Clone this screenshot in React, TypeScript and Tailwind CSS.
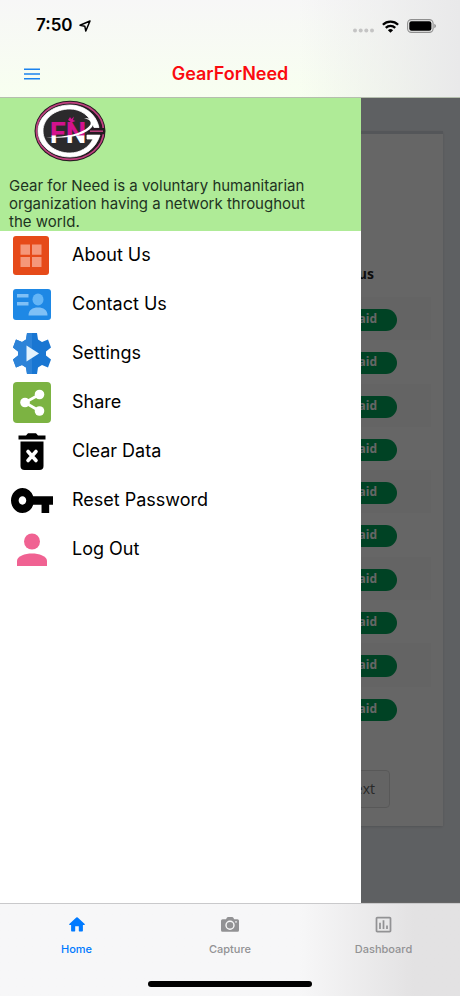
import type { ReactNode } from 'react'
import { MdOutlineInsertChart, MdVpnKey } from 'react-icons/md'

const payments = Array.from({ length: 10 }, (_, i) => ({ id: i + 1, status: 'Paid' }))

function LogoMark() {
  return (
    <svg viewBox="0 0 72 62" className="h-[62px] w-[72px]" role="img" aria-label="Gear for Need logo">
      <ellipse cx="36" cy="32" rx="34" ry="29.5" fill="#6b8f5c" opacity="0.6" />
      <ellipse cx="36" cy="31" rx="35.5" ry="30.3" fill="#231a20" />
      <ellipse cx="36" cy="31" rx="33.6" ry="28.4" fill="#241c22" stroke="#c0417f" strokeWidth="1.7" />
      <ellipse cx="36" cy="31" rx="28" ry="24" fill="#2b2a2c" />
      {/* white G ring, open on the right */}
      <path
        d="M65 27.500C62 13 49 5 36 5C18.500 5 4 16.500 4 31S18.500 57 36 57C51 57 62 48 66 35H53V39H59C55 47.500 46 53 36 53C20.500 53 9 43 9 31S20.500 9 36 9C46 9 56 15 60 27.500Z"
        fill="#fff"
        stroke="#fff"
        strokeWidth="0.8"
      />
      <path d="M55 28H71V34.300H53Z" fill="#231a20" />
      <path d="M56 31.200H69" stroke="#c0417f" strokeWidth="1.500" />
      <defs>
        <linearGradient id="letters" gradientUnits="userSpaceOnUse" x1="0" y1="20" x2="0" y2="44">
          <stop offset="0.64" stopColor="#d3128e" />
          <stop offset="0.65" stopColor="#fff" />
        </linearGradient>
      </defs>
      <text
        x="34"
        y="43"
        textAnchor="middle"
        fontFamily="Roboto, sans-serif"
        fontWeight="700"
        fontSize="29"
        fill="url(#letters)"
      >
        FN
      </text>
      <path d="M12 37C34 38 52 32 56.500 24.500C57.500 21 55 19 50 18.500C59 17 61.500 21.500 58 27C51 35.500 32 39.500 12 37Z" fill="#fff" />
      <path d="M34 20l2-3 1.500 2L40 16.500l-1 3.500 2.500 1-4 1.500Z" fill="#d3128e" />
    </svg>
  )
}

function AboutIcon() {
  return (
    <svg viewBox="0 0 38 39" className="h-[39px] w-[38px]" aria-hidden="true">
      <rect width="36" height="39" rx="3" fill="#e64a19" />
      <path d="M7.500 8.500H17V18.800H7.500zM19 8.500H28.500V18.800H19zM7.500 21H17V31H7.500zM19 21H28.500V31H19z" fill="#f5977a" />
    </svg>
  )
}

function ContactIcon() {
  return (
    <svg viewBox="0 0 38 31" className="h-[31px] w-[38px]" aria-hidden="true">
      <rect width="38" height="31" rx="3" fill="#1e88e5" />
      <path d="M4 5H15.500V8.500H4zM4 13H15.500V16.500H4z" fill="#7fc0f6" />
      <ellipse cx="25" cy="10.500" rx="5.500" ry="6" fill="#64b5f6" />
      <path d="M15.500 26.500C15.500 21 19.500 18.500 25 18.500S34.500 21 34.500 26.500Z" fill="#7fc0f6" />
    </svg>
  )
}

function SettingsIcon() {
  return (
    <svg viewBox="0 0 38 41" className="h-[41px] w-[38px]" aria-hidden="true">
      <path
        d="M14 0H24L25 6.500L29 9L35 6.500L38 14.500L33 18.500V22.500L38 26.500L35 34.500L29 32L25 34.500L24 41H14L13 34.500L9 32L3 34.500L0 26.500L5 22.500V18.500L0 14.500L3 6.500L9 9L13 6.500Z"
        fill="#1976d2"
      />
      <path
        d="M14 0H19V41H14L13 34.500L9 32L3 34.500L0 26.500L5 22.500V18.500L0 14.500L3 6.500L9 9L13 6.500Z"
        fill="#2d83d8"
      />
      <path d="M13.500 12.500L26 20.500L13.500 28.500Z" fill="#e3f2fd" />
    </svg>
  )
}

function ShareIcon() {
  return (
    <svg viewBox="0 0 38 41" className="h-[41px] w-[38px]" aria-hidden="true">
      <rect width="38" height="41" rx="4" fill="#7cb342" />
      <path d="M26.500 12.500L12 20.500L26.500 29" fill="none" stroke="#fff" strokeWidth="2.800" />
      <circle cx="26.500" cy="12.500" r="4.800" fill="#fff" />
      <circle cx="12" cy="20.500" r="4.800" fill="#fff" />
      <circle cx="26.500" cy="29" r="4.800" fill="#fff" />
    </svg>
  )
}

function ClearIcon() {
  return (
    <svg viewBox="0 0 28 37" className="h-[37px] w-7" aria-hidden="true">
      <path d="M.5 2.500H8L10 .3H18L20 2.500H27.500V6.500H.5Z" />
      <path d="M2.500 8.500H25.500V33Q25.500 37 21.500 37H6.500Q2.500 37 2.500 33Z" />
      <path d="M10 18.500L18 27.500M18 18.500L10 27.500" stroke="#fff" strokeWidth="3.600" strokeLinecap="round" />
    </svg>
  )
}

function KeyIcon() {
  return <MdVpnKey viewBox="1 6 22 12" preserveAspectRatio="none" className="h-[25px] w-[42px]" aria-hidden="true" />
}

function PersonIcon() {
  return (
    <svg viewBox="0 0 30 33" className="h-[33px] w-[30px]" aria-hidden="true" fill="#f06292">
      <circle cx="15" cy="8.500" r="8" />
      <path d="M0 33V28C0 23 8 20.500 15 20.500S30 23 30 28V33Z" />
    </svg>
  )
}

function HomeIcon() {
  return (
    <svg viewBox="0 0 16 15" className="h-[15px] w-4" aria-hidden="true" fill="currentColor">
      <path d="M8 .2Q8.300.2 8.700.6L15.700 6.900Q16.200 7.700 15.300 7.900H13.900V13.700Q13.900 14.500 13.100 14.500H10.400Q9.800 14.500 9.800 13.800V9.200H6.200V13.800Q6.200 14.500 5.600 14.500H2.900Q2.100 14.500 2.100 13.700V7.900H.7Q-.2 7.700.3 6.900L7.300.6Q7.700.2 8 .2Z" />
    </svg>
  )
}

function CameraIcon() {
  return (
    <svg viewBox="0 0 18 15" className="h-[15px] w-[18px]" aria-hidden="true">
      <path d="M5 2.200L6 .6Q6.300 0 7 0H11.200Q11.800 0 12.200.6L13.200 2.200H16.500Q18 2.200 18 3.700V13.300Q18 14.800 16.500 14.800H1.500Q0 14.800 0 13.300V3.700Q0 2.200 1.500 2.200Z" fill="currentColor" />
      <circle cx="9" cy="8.200" r="4" fill="none" stroke="#f8f8f8" strokeWidth="1.400" />
      <circle cx="15" cy="4.900" r=".8" fill="#f8f8f8" />
    </svg>
  )
}

const menuItems: { label: string; icon: ReactNode }[] = [
  { label: 'About Us', icon: <AboutIcon /> },
  { label: 'Contact Us', icon: <ContactIcon /> },
  { label: 'Settings', icon: <SettingsIcon /> },
  { label: 'Share', icon: <ShareIcon /> },
  { label: 'Clear Data', icon: <ClearIcon /> },
  { label: 'Reset Password', icon: <KeyIcon /> },
  { label: 'Log Out', icon: <PersonIcon /> },
]

const tabs = [
  { label: 'Home', icon: <HomeIcon />, active: true },
  { label: 'Capture', icon: <CameraIcon />, active: false },
  { label: 'Dashboard', icon: <MdOutlineInsertChart className="size-[21px]" aria-hidden="true" />, active: false },
]

function StatusBar() {
  return (
    <div className="flex h-[50px] items-center justify-between pt-0.5 pr-6 pl-9">
      <div className="flex items-center gap-1.5 text-[17px] font-semibold">
        7:50
        <svg viewBox="0 0 12 12" className="size-3" aria-hidden="true">
          <path d="M11 1L1 5.200L5.800 6.200L6.800 11Z" fill="none" stroke="#000" strokeWidth="1.500" strokeLinejoin="round" />
        </svg>
      </div>
      <div className="flex items-center gap-2">
        <svg viewBox="0 0 21 14" className="h-3.5 w-[21px]" aria-hidden="true" fill="#c4c4c4">
          <circle cx="2" cy="11.500" r="2" />
          <circle cx="7.700" cy="11.500" r="2" />
          <circle cx="13.300" cy="11.500" r="2" />
          <circle cx="19" cy="11.500" r="2" />
        </svg>
        <svg viewBox="0 0 17 13" className="h-[13px] w-[17px]" aria-hidden="true" fill="none" stroke="#000" strokeWidth="2.300">
          <path d="M.9 4.700A10.800 10.800 0 0 1 16.100 4.700" />
          <path d="M3.800 7.900A6.700 6.700 0 0 1 13.200 7.900" />
          <path d="M8.500 12.800L5.900 10.200A3.700 3.700 0 0 1 11.100 10.200Z" fill="#000" stroke="none" />
        </svg>
        <svg viewBox="0 0 29 14" className="h-3.5 w-[29px]" aria-hidden="true">
          <rect x=".6" y=".6" width="25.500" height="12.800" rx="3.800" fill="none" stroke="#8f8f8f" strokeWidth="1.100" />
          <rect x="2.300" y="2.300" width="22.100" height="9.400" rx="2.200" />
          <path d="M27.300 4.800Q29 5.500 29 7T27.300 9.200Z" fill="#8f8f8f" />
        </svg>
      </div>
    </div>
  )
}

function PaymentsPage() {
  return (
    <div className="h-full bg-[#ecf0f5] px-[17px] pt-[33px] pb-[76px] font-['Open_Sans','Noto_Sans',sans-serif]">
      <section className="border-t-[3px] border-[#d2d6de] bg-white px-3 pt-[120px] pb-[18px] shadow-sm">
        <table className="w-full text-right">
          <thead>
            <tr className="h-[43px] text-sm">
              <th className="pr-[57px] pb-1 font-bold text-[#222]">Status</th>
            </tr>
          </thead>
        </table>
        <table className="h-[433px] w-full text-right" aria-label="Payment status">
          <tbody>
            {payments.map((payment) => (
              <tr key={payment.id} className="odd:bg-[#f9f9f9]">
                <td className="pr-[34px] align-middle">
                  <span className="inline-block rounded-full bg-[#00a65a] px-5 pb-0.5 align-middle text-xs leading-5 font-bold text-white">
                    {payment.status}
                  </span>
                </td>
              </tr>
            ))}
          </tbody>
        </table>
        <div className="flex justify-end pt-10 pr-[41px]">
          <button className="h-[38px] rounded-sm border border-[#ddd] bg-[#fafafa] px-3.5 text-sm text-[#666]">Next</button>
        </div>
      </section>
    </div>
  )
}

function Drawer() {
  return (
    <aside className="absolute inset-y-0 left-0 w-[361px] bg-white">
      <div className="bg-[#afeb97] pt-0.5">
        <div className="pl-[34px]">
          <LogoMark />
        </div>
        <p className="pt-[15px] pr-10 pl-[9px] text-[15px] leading-[18px] text-[#1e3322]">
          Gear for Need is a voluntary humanitarian organization having a network throughout the world.
        </p>
      </div>
      <nav>
        <ul>
          {menuItems.map((item) => (
            <li key={item.label}>
              <a href="#" className="flex h-[49px] items-center gap-2 pb-px pl-2 text-lg text-black">
                <span className="flex w-12 justify-center">{item.icon}</span>
                <span className="pl-2">{item.label}</span>
              </a>
            </li>
          ))}
        </ul>
      </nav>
    </aside>
  )
}

export default function App() {
  return (
    <div className="flex min-h-screen flex-col bg-white font-['Inter','Liberation_Sans',sans-serif]">
      <header className="border-b border-[#b5bfae] bg-linear-to-b from-[#f7f7f7] to-[#f8fff0]">
        <div className="bg-linear-to-r from-[#e9e9ea]/0 from-65% to-[#e9e9ea]">
          <StatusBar />
          <div className="grid h-[47px] grid-cols-[64px_1fr_64px] items-center">
            <button aria-label="Menu" className="flex h-full items-center justify-center">
              <svg viewBox="0 0 16 12" className="h-3 w-4" aria-hidden="true" stroke="#1b82ee" strokeWidth="1.500">
                <path d="M0 1.200H16M0 6H16M0 10.800H16" />
              </svg>
            </button>
            <h1 className="text-center text-lg font-semibold text-[#fb0a0f]">GearForNeed</h1>
          </div>
        </div>
      </header>

      <main className="relative flex-1">
        <PaymentsPage />
        <div className="absolute inset-0 bg-black/60" />
        <Drawer />
      </main>

      <footer className="border-t border-[#c9c9cb] bg-linear-to-r from-[#f7f7f8] from-65% to-[#e3e2e3] to-90%">
        <nav className="grid h-[60px] grid-cols-[153px_1fr_153px]">
          {tabs.map((tab) => (
            <button
              key={tab.label}
              className={`flex flex-col items-center gap-1.5 pt-[9px] text-[11px] leading-4 font-medium ${tab.active ? 'text-[#007aff]' : 'text-[#929294]'}`}
            >
              <span className="flex h-[22px] items-center">{tab.icon}</span>
              {tab.label}
            </button>
          ))}
        </nav>
        <div className="flex h-8 justify-center pt-[17px]">
          <div className="h-1.5 w-[164px] rounded-full bg-black" />
        </div>
      </footer>
    </div>
  )
}
